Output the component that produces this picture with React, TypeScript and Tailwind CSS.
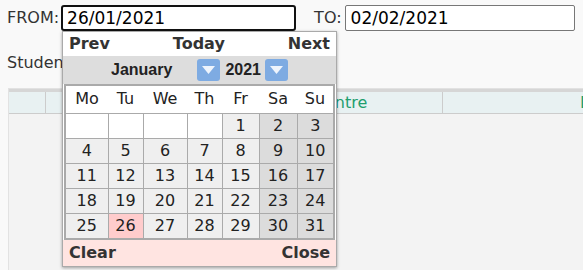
import React from "react";

const weeks: (number | null)[][] = [
  [null, null, null, null, 1, 2, 3],
  [4, 5, 6, 7, 8, 9, 10],
  [11, 12, 13, 14, 15, 16, 17],
  [18, 19, 20, 21, 22, 23, 24],
  [25, 26, 27, 28, 29, 30, 31],
];

const days = ["Mo", "Tu", "We", "Th", "Fr", "Sa", "Su"];
const colWidths = [43, 35, 44, 35, 37, 38, 37];
const selected = 26;

function DropButton() {
  return (
    <span className="flex h-[22px] w-[23px] items-center justify-center rounded-[3px] bg-[#7eabe2]">
      <svg width="13" height="8" viewBox="0 0 13 8">
        <path d="M0 0 L13 0 L6.5 8 Z" fill="#eef4fc" />
      </svg>
    </span>
  );
}

function DatePicker() {
  return (
    <div className="absolute left-[62px] top-[31px] w-[275px] border border-[#aaa] bg-white shadow-[0_1px_3px_rgba(0,0,0,0.35)] text-[16px] text-[#222]">
      <div className="flex h-[24px] items-center justify-between px-[6px] font-bold text-[#333]">
        <span>Prev</span>
        <span>Today</span>
        <span>Next</span>
      </div>
      <div className="flex h-[28px] items-center justify-center bg-[#dddddd] font-['Liberation_Sans',Arial,sans-serif] font-bold text-[16px] text-[#222]">
        <span className="mr-[25px]">January</span>
        <DropButton />
        <span className="ml-[5px] mr-[4px]">2021</span>
        <DropButton />
      </div>
      <table className="mx-[1px] table-fixed border-collapse border-2 border-[#aaa]" style={{ width: 271 }}>
        <colgroup>
          {colWidths.map((w, i) => (
            <col key={i} style={{ width: w }} />
          ))}
        </colgroup>
        <thead>
          <tr className="h-[28px] bg-white">
            {days.map((d) => (
              <th key={d} className="p-0 text-center font-normal border-b border-[#aaa]">
                {d}
              </th>
            ))}
          </tr>
        </thead>
        <tbody>
          {weeks.map((week, wi) => (
            <tr key={wi} className="h-[25px]">
              {week.map((n, di) => {
                let bg = "bg-[#efefef]";
                if (n === null) bg = "bg-white";
                else if (n === selected) bg = "bg-[#ffcccc]";
                else if (di >= 5) bg = "bg-[#dcdcdc]";
                return (
                  <td key={di} className={`p-0 text-center border border-[#aaa] ${bg}`}>
                    {n ?? ""}
                  </td>
                );
              })}
            </tr>
          ))}
        </tbody>
      </table>
      <div className="flex h-[26px] items-center justify-between bg-[#ffe4e1] px-[6px] font-bold text-[#333]">
        <span>Clear</span>
        <span>Close</span>
      </div>
    </div>
  );
}

export default function App() {
  return (
    <div className="relative h-[270px] w-[583px] overflow-hidden bg-[#f9f9f9] font-['DejaVu_Sans',Verdana,sans-serif] text-[16px] text-[#333]">
      <div className="flex items-center pl-[7px] pt-[5px]">
        <label>FROM:</label>
        <input
          readOnly
          value="26/01/2021"
          className="ml-[2px] h-[26px] w-[235px] rounded-[3px] border-2 border-[#111] bg-white px-[4px] text-[17px] text-black outline-none"
        />
        <label className="ml-[18px]">TO:</label>
        <input
          readOnly
          value="02/02/2021"
          className="ml-[3px] h-[26px] w-[230px] rounded-[2px] border border-[#777] bg-white px-[5px] text-[17px] text-black outline-none"
        />
      </div>
      <div className="mt-[20px] pl-[7px] leading-[24px]">Student</div>
      <div className="ml-[8px] mt-[13px] h-[200px] w-[900px] border-l border-t border-[#e2e2e2] bg-[#f3f3f3]">
        <div className="flex h-[25px] border-b border-t-[3px] border-b-[#cccccc] border-t-[#d6d6d6] bg-[#e8f1f2] text-[#1e9e6e]">
          <div className="w-[37px] border-r border-[#cccccc]" />
          <div className="w-[193px]" />
          <div className="flex w-[204px] items-center justify-center border-r border-[#cccccc]">Centre</div>
          <div className="flex w-[312px] items-center justify-center">Date</div>
        </div>
      </div>
      <DatePicker />
    </div>
  );
}
